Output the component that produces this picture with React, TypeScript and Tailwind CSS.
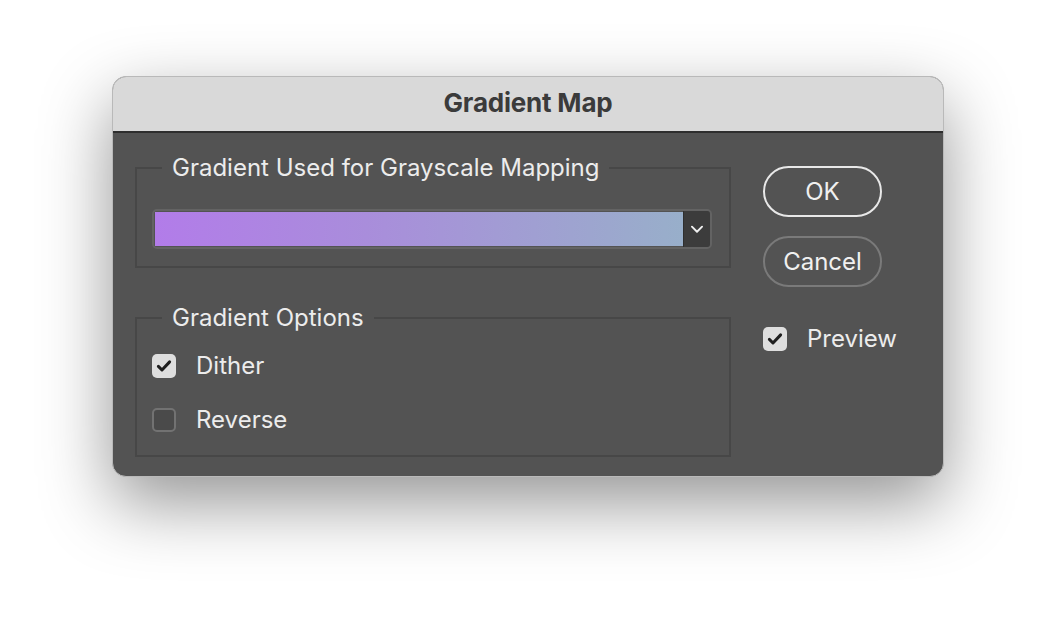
import { useState } from "react";

function CheckIcon() {
  return (
    <svg viewBox="0 0 24 24" className="w-[18px] h-[18px]" fill="none">
      <path d="M4.5 12.5l4.8 4.8L19.5 6.5" stroke="#1f1f1f" strokeWidth="4" strokeLinecap="round" strokeLinejoin="round" />
    </svg>
  );
}

function Checkbox({ checked, label, onToggle }: { checked: boolean; label: string; onToggle: () => void }) {
  return (
    <label className="flex items-center gap-[20px] cursor-default select-none" onClick={onToggle}>
      <span
        className={
          checked
            ? "shrink-0 w-[24px] h-[24px] rounded-[5px] bg-[#dedede] flex items-center justify-center"
            : "shrink-0 w-[24px] h-[24px] rounded-[5px] bg-[#4a4a4a] border-2 border-[#727272]"
        }
      >
        {checked && <CheckIcon />}
      </span>
      <span className="text-[24px] leading-[28px] text-[#ececec] whitespace-nowrap">{label}</span>
    </label>
  );
}

export default function App() {
  const [dither, setDither] = useState(true);
  const [reverse, setReverse] = useState(false);
  const [preview, setPreview] = useState(true);

  return (
    <div
      className="min-h-[626px] bg-white flex justify-center pt-[76px]"
      style={{ fontFamily: "Inter, 'Noto Sans', 'Liberation Sans', sans-serif" }}
    >
      <div className="w-[832px] h-[401px] rounded-[14px] overflow-hidden bg-[#535353] border border-[#b9b9b9] shadow-[0_26px_70px_rgba(0,0,0,0.42)] flex flex-col">
        <div className="h-[56px] shrink-0 bg-[#d9d9d9] border-b-2 border-[#2e2e2e] flex items-center justify-center pb-[3px]">
          <span className="text-[26px] font-bold text-[#3b3b3b] tracking-[-0.2px]">Gradient Map</span>
        </div>

        <div className="flex flex-1 pl-[22px] pr-[61px] pt-[21px]">
          <div className="w-[596px] flex flex-col gap-[36px]">
            <fieldset className="border-2 border-[#474747] px-[15px] pt-[27px] pb-[17px]">
              <legend className="ml-[10px] px-[10px] text-[24px] leading-[28px] text-[#ececec]">
                Gradient Used for Grayscale Mapping
              </legend>
              <div className="w-[560px] h-[40px] rounded-[5px] border-2 border-[#636363] flex overflow-hidden">
                <div className="flex-1 m-px mr-0 bg-[linear-gradient(90deg,#b27ce9_0%,#a98ddb_40%,#98afca_100%)]" />
                <div className="w-[27px] bg-[#3c3c3c] border-l border-[#2f2f2f] flex items-center justify-center">
                  <svg viewBox="0 0 12 8" className="w-[14px] h-[9px]" fill="none">
                    <path d="M1.5 1.5L6 6l4.5-4.5" stroke="#f0f0f0" strokeWidth="1.7" strokeLinecap="round" strokeLinejoin="round" />
                  </svg>
                </div>
              </div>
            </fieldset>

            <fieldset className="border-2 border-[#474747] px-[15px] pt-[20px] pb-[21px]">
              <legend className="ml-[10px] px-[10px] text-[24px] leading-[28px] text-[#ececec]">Gradient Options</legend>
              <div className="flex flex-col gap-[26px]">
                <Checkbox checked={dither} label="Dither" onToggle={() => setDither(!dither)} />
                <Checkbox checked={reverse} label="Reverse" onToggle={() => setReverse(!reverse)} />
              </div>
            </fieldset>
          </div>

          <div className="ml-[32px] w-[119px] shrink-0 flex flex-col pt-[12px]">
            <button className="h-[51px] rounded-full border-2 border-[#e8e8e8] text-[24px] text-[#f0f0f0]">OK</button>
            <button className="mt-[19px] h-[51px] rounded-full border-2 border-[#7a7a7a] text-[24px] text-[#f0f0f0]">
              Cancel
            </button>
            <div className="mt-[38px]">
              <Checkbox checked={preview} label="Preview" onToggle={() => setPreview(!preview)} />
            </div>
          </div>
        </div>
      </div>
    </div>
  );
}
